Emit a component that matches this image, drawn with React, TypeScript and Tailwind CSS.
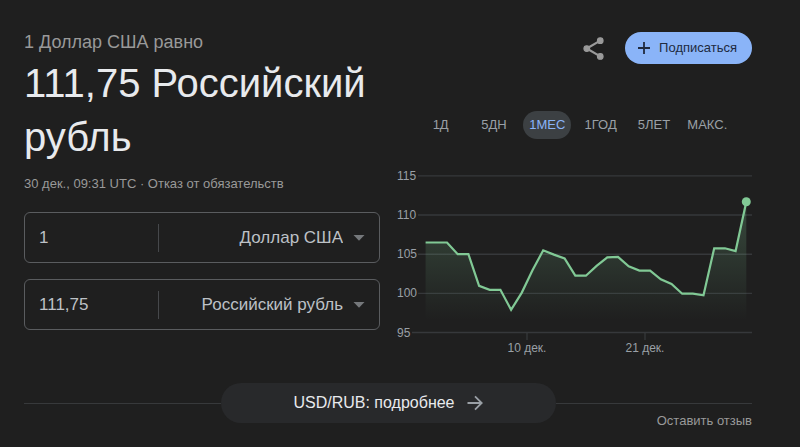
import { useState } from 'react'
import clsx from 'clsx'

const ranges = ['1Д', '5ДН', '1МЕС', '1ГОД', '5ЛЕТ', 'МАКС.']

const currencies = ['Доллар США', 'Российский рубль']

const rates = [
  106.5, 106.5, 106.5, 105, 105, 100.95, 100.45, 100.45, 97.9, 100.1, 102.95, 105.5, 104.95, 104.45, 102.25, 102.25,
  103.5, 104.6, 104.65, 103.45, 102.9, 102.9, 101.8, 101.2, 99.95, 99.95, 99.75, 105.75, 105.75, 105.4, 111.7,
]

const gridValues = [115, 110, 105, 100, 95]

const dateTicks = [
  { x: 131, label: '10 дек.' },
  { x: 249, label: '21 дек.' },
]

const toX = (i: number) => 29.6 + (i * 320.7) / (rates.length - 1)
const toY = (value: number) => 164.5 - (value - 95) * 7.83

function RateChart() {
  const points = rates.map((rate, i) => `${toX(i).toFixed(1)},${toY(rate).toFixed(1)}`)
  const line = `M${points.join(' L')}`
  const lastX = toX(rates.length - 1)
  const lastY = toY(rates[rates.length - 1])

  return (
    <svg viewBox="0 0 356 192" className="block w-full" role="img" aria-label="USD/RUB">
      <defs>
        <linearGradient id="rate-fill" gradientUnits="userSpaceOnUse" x1="0" y1="30" x2="0" y2="152">
          <stop offset="0" stopColor="#81c995" stopOpacity="0.26" />
          <stop offset="1" stopColor="#81c995" stopOpacity="0" />
        </linearGradient>
      </defs>
      {gridValues.map((value) => (
        <g key={value}>
          <line x1={value > 99 ? 22 : 16} x2="356" y1={toY(value)} y2={toY(value)} stroke="#36383b" strokeWidth="1.4" />
          <text x="1" y={toY(value) + 4} className="fill-[#9aa0a6] text-[12px]">
            {value}
          </text>
        </g>
      ))}
      {dateTicks.map((tick) => (
        <g key={tick.label}>
          <line x1={tick.x} x2={tick.x} y1="165" y2="172" stroke="#3c4043" />
          <text x={tick.x} y="184" textAnchor="middle" className="fill-[#9aa0a6] text-[12px]">
            {tick.label}
          </text>
        </g>
      ))}
      <path d={`${line} L${lastX},152 L${toX(0)},152 Z`} fill="url(#rate-fill)" />
      <path d={line} fill="none" stroke="#81c995" strokeWidth="2.2" />
      <circle cx={lastX} cy={lastY} r="4.5" fill="#81c995" />
    </svg>
  )
}

type CurrencyFieldProps = {
  name: string
  amount: string
  currency: string
}

function CurrencyField({ name, amount, currency }: CurrencyFieldProps) {
  return (
    <div className="flex h-[51px] items-center rounded-md border border-[#5a5c5f] text-[17px] text-[#bdc1c6]">
      <input
        aria-label={`${name}: сумма`}
        defaultValue={amount}
        className="w-[133px] min-w-0 bg-transparent pl-3.5 outline-none"
      />
      <div className="h-7 w-px bg-[#46484b]" />
      <label className="flex min-w-0 flex-1 items-center justify-end gap-2.5 pr-3.5">
        <select
          aria-label={`${name}: валюта`}
          defaultValue={currency}
          className="min-w-0 flex-1 appearance-none bg-transparent text-right outline-none [text-align-last:right]"
        >
          {currencies.map((item) => (
            <option key={item} value={item}>
              {item}
            </option>
          ))}
        </select>
        <svg viewBox="0 0 12 6" className="h-1.5 w-3 shrink-0" fill="#75787b">
          <path d="M0.5 0h11L6 5.8z" />
        </svg>
      </label>
    </div>
  )
}

export default function App() {
  const [range, setRange] = useState('1МЕС')

  return (
    <main className="min-h-screen bg-[#1f1f1f] pt-7 pr-12 pl-6 font-['Liberation_Sans',Arial,sans-serif]">
      <div className="grid grid-cols-2 gap-4">
        <section>
          <p className="text-[18px] leading-7 text-[#999999]">1 Доллар США равно</p>
          <h1 className="text-[40px] leading-[54px] text-[#e8eaed]">111,75 Российский рубль</h1>
          <p className="mt-2.5 text-[13px] leading-5 text-[#999999]">
            30 дек., 09:31 UTC · <a href="#disclaimer">Отказ от обязательств</a>
          </p>
          <div className="mt-[18px] flex flex-col gap-4">
            <CurrencyField name="Из" amount="1" currency="Доллар США" />
            <CurrencyField name="В" amount="111,75" currency="Российский рубль" />
          </div>
        </section>

        <section className="pt-1">
          <div className="flex items-center justify-end gap-[18px]">
            <button aria-label="Поделиться">
              <svg viewBox="0 0 24 24" className="size-[27px]" fill="#9a9a9a" stroke="#9a9a9a">
                <path d="M18 5L6 12l12 7" fill="none" strokeWidth="2" />
                <circle cx="18" cy="5" r="2.5" />
                <circle cx="6" cy="12" r="2.5" />
                <circle cx="18" cy="19" r="2.5" />
              </svg>
            </button>
            <button className="flex h-8 items-center gap-2 rounded-full bg-[#8ab4f8] pr-[15px] pl-3 text-[13px] text-[#202b3f]">
              <svg viewBox="0 0 14 14" className="size-3.5" stroke="currentColor" strokeWidth="1.8">
                <path d="M7 1v12M1 7h12" />
              </svg>
              Подписаться
            </button>
          </div>

          <div className="mt-[47px] grid grid-cols-6 justify-items-center px-[18px]">
            {ranges.map((item) => (
              <button
                key={item}
                onClick={() => setRange(item)}
                className={clsx(
                  'h-7 w-12 rounded-full text-[13px]',
                  range === item ? 'bg-[#3c4043] text-[#8ab4f8]' : 'text-[#9aa0a6]',
                )}
              >
                {item}
              </button>
            ))}
          </div>

          <div className="mt-[29px]">
            <RateChart />
          </div>
        </section>
      </div>

      <footer className="mt-[23px]">
        <div className="flex items-center">
          <div className="h-px flex-1 bg-[#37393b]" />
          <a
            href="#details"
            className="flex h-10 w-[335px] items-center justify-center gap-3 rounded-full bg-[#28292b] text-[16px] text-[#e8eaed]"
          >
            USD/RUB: подробнее
            <svg viewBox="0 0 16 16" className="size-4" fill="none" stroke="#9aa0a6" strokeWidth="1.8">
              <path d="M0.5 8h14M8 1.3L14.7 8 8 14.7" />
            </svg>
          </a>
          <div className="h-px flex-1 bg-[#37393b]" />
        </div>
        <div className="-mt-3 flex justify-end">
          <a href="#feedback" className="text-[13px] leading-5 text-[#999999]">
            Оставить отзыв
          </a>
        </div>
      </footer>
    </main>
  )
}
